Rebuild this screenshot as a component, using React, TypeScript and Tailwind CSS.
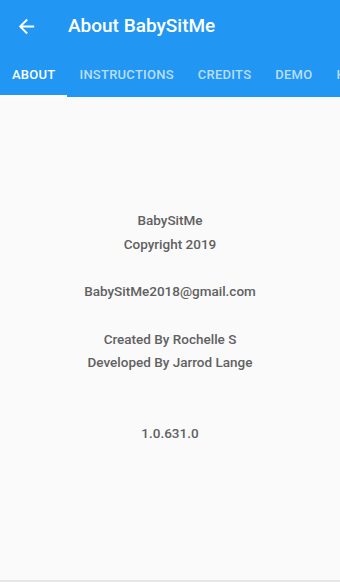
import React from "react";

export default function App() {
  const tabs = ["About", "Instructions", "Credits", "Demo", "Help"];
  return (
    <div
      className="w-[340px] h-[582px] flex flex-col bg-[#fafafa] overflow-hidden"
      style={{ fontFamily: "Roboto, 'Noto Sans', sans-serif" }}
    >
      <div className="bg-[#2196f3] shrink-0">
        <div className="h-[53px] flex items-center">
          <div className="w-[68px] flex items-center pl-[15px]">
            <svg width="23" height="23" viewBox="0 0 24 24" fill="#ffffff">
              <path d="M20 11H7.83l5.59-5.59L12 4l-8 8 8 8 1.41-1.41L7.83 13H20v-2z" />
            </svg>
          </div>
          <span className="text-white text-[19px] font-medium">About BabySitMe</span>
        </div>
        <div className="h-[44px] flex items-stretch whitespace-nowrap">
          {tabs.map((t, i) => (
            <div
              key={t}
              className={
                i === 0
                  ? "relative px-3 flex items-center text-[13px] tracking-[0.25px] font-medium uppercase text-white"
                  : "relative px-3 flex items-center text-[13px] tracking-[0.25px] font-medium uppercase text-white/70"
              }
            >
              {t}
              {i === 0 && <div className="absolute left-0 right-0 bottom-0 h-[2px] bg-white" />}
            </div>
          ))}
        </div>
      </div>
      <div className="flex-1 flex flex-col items-center pt-[112px] text-[13.5px] font-medium text-[#616161] leading-[23.7px]">
        <div>BabySitMe</div>
        <div>Copyright 2019</div>
        <div>&nbsp;</div>
        <div>BabySitMe2018@gmail.com</div>
        <div>&nbsp;</div>
        <div>Created By Rochelle S</div>
        <div>Developed By Jarrod Lange</div>
        <div>&nbsp;</div>
        <div>&nbsp;</div>
        <div>1.0.631.0</div>
      </div>
      <div className="h-[2px] bg-[#e6e6e6] shrink-0" />
    </div>
  );
}
